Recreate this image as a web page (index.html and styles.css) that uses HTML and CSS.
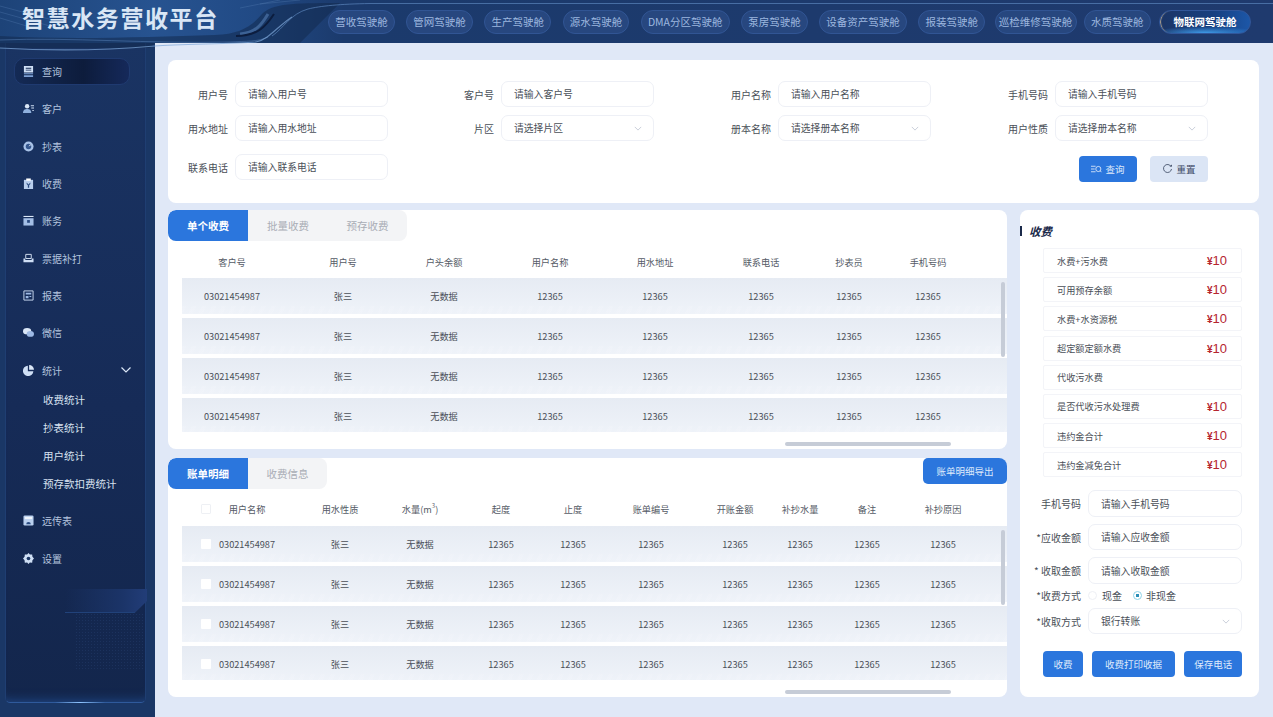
FILE: index.html
```html
<!DOCTYPE html>
<html lang="zh-CN">
  <head>
    <meta charset="UTF-8" />
    <meta name="viewport" content="width=device-width, initial-scale=1.0" />
    <title>智慧水务营收平台</title>
    <link rel="stylesheet" href="styles.css">
  </head>
  <body>
    <svg class="head-deco" width="1273" height="56" viewBox="0 0 1273 56" fill="none">
      <path d="M0 36C70 40 150 37 215 35C240 34 252 26 262 14C272 4 290 3 340 3L300 43H155L150 48H0Z" fill="#13294f" opacity=".55"/>
      <path d="M240 34C256 33 262 24 268 14" stroke="#5f8cc4" stroke-width="3" opacity=".5"/>
      <path d="M236 36C258 36 266 26 274 14" stroke="#0c1d3e" stroke-width="2"/>
      <path d="M272 36C284 28 290 14 308 9C320 6 340 4 370 3.500H1273" stroke="#5f8ac2" opacity=".65"/>
      <path d="M0 40C70 37 150 44 230 42C246 41 258 42 268 37" stroke="#5f8ac2" opacity=".45"/>
      <path d="M0 48C50 51 110 50 155 46C180 44 230 44 256 42C268 40 278 26 292 17" stroke="#7ea6d8" stroke-width="1.2" opacity=".7"/>
      <path d="M0 6L60 22M0 12L50 26M0 18L40 30M260 4L300 0M240 8L280 0" stroke="#5c86ba" opacity=".3"/>
    </svg>

    <header class="topbar">
      <h1 class="logo">智慧水务营收平台</h1>
      <nav class="top-nav">
        <a class="pill">营收驾驶舱</a>
        <a class="pill">管网驾驶舱</a>
        <a class="pill">生产驾驶舱</a>
        <a class="pill">源水驾驶舱</a>
        <a class="pill">DMA分区驾驶舱</a>
        <a class="pill">泵房驾驶舱</a>
        <a class="pill">设备资产驾驶舱</a>
        <a class="pill">报装驾驶舱</a>
        <a class="pill pill-inspect">巡检维修驾驶舱</a>
        <a class="pill pill-water">水质驾驶舱</a>
        <a class="pill active">物联网驾驶舱</a>
      </nav>
    </header>

    <div class="layout">
      <aside class="sidebar">
        <div class="side-frame"></div>
        <div class="side-band"></div>
        <div class="side-dots"></div>
        <ul class="menu">
          <li class="menu-item active">
            <svg class="icon" viewBox="0 0 12 12"><path d="M1 0H11V7H1ZM3 2V3H9V2ZM3 4V5H9V4Z" fill-rule="evenodd" fill="#cfdff5"/><path d="M1 8H11V9H1ZM1 10H11V12H1Z" fill="#7fa2d6"/></svg>
            查询
          </li>
          <li class="menu-item">
            <svg class="icon" viewBox="0 0 12 12"><circle cx="4.5" cy="3.5" r="2.4" fill="#dbe7f7"/><path d="M0 11C0 7.500 2 6.500 4.500 6.500S9 7.500 9 11Z" fill="#8fb0dd"/><path d="M8.500 2.500H12V3.500H8.500ZM9 5H12V6H9ZM10 7.500H12V8.500H10Z" fill="#cfdff5"/></svg>
            客户
          </li>
          <li class="menu-item">
            <svg class="icon" viewBox="0 0 12 12"><circle cx="6" cy="6" r="5.500" fill="#a9c3e8"/><circle cx="6" cy="6" r="3" fill="#35578f"/><path d="M6 6L8 3.500L8.500 4.500Z" fill="#fff"/></svg>
            抄表
          </li>
          <li class="menu-item">
            <svg class="icon" viewBox="0 0 12 12"><path d="M1 2H11V12H1Z" fill="#b9cfee"/><path d="M3.500 0.500H8.500V3H3.500Z" fill="#fff"/><path d="M4 5L6 7L8 5V6.500L6.700 8V10.500H5.300V8L4 6.500Z" fill="#28497f"/></svg>
            收费
          </li>
          <li class="menu-item">
            <svg class="icon" viewBox="0 0 12 12"><path d="M0.500 1H11.500V2.200H0.500Z" fill="#dbe7f7"/><path d="M0.500 3.500H11.500V11.500H0.500Z" fill="#a3bee6"/><path d="M4.500 5.500H7.500V8.500H4.500Z" fill="#28497f"/></svg>
            账务
          </li>
          <li class="menu-item">
            <svg class="icon" viewBox="0 0 12 12"><path d="M3 1.500H9V6H3Z" fill="none" stroke="#dbe7f7"/><path d="M0.500 6H2.500V7.500H9.500V6H11.500V10H0.500Z" fill="#cfdff5"/></svg>
            票据补打
          </li>
          <li class="menu-item">
            <svg class="icon" viewBox="0 0 12 12"><path d="M1 1H11V11H1Z" fill="none" stroke="#cfdff5"/><path d="M3 3H9V5H3ZM3 6.500H6V9H3ZM7 6.500H9V7.500H7Z" fill="#9db9e4"/></svg>
            报表
          </li>
          <li class="menu-item">
            <svg class="icon" viewBox="0 0 12 12"><ellipse cx="4.500" cy="4.500" rx="4.500" ry="3.500" fill="#dbe7f7"/><ellipse cx="8" cy="7.500" rx="4" ry="3.200" fill="#9db9e4"/></svg>
            微信
          </li>
          <li class="menu-item">
            <svg class="icon" viewBox="0 0 12 12"><path d="M5.300 0.700V6.700H11.300A5.700 5.700 0 1 1 5.300 0.700Z" fill="#cfdff5"/><path d="M6.700 0A5.300 5.300 0 0 1 12 5.300H6.700Z" fill="#dbe7f7"/></svg>
            统计
            <svg class="menu-arrow" viewBox="0 0 10 6"><path d="M0.500 0.500L5 5L9.500 0.500" fill="none" stroke="#dbe7f7" stroke-width="1.200"/></svg>
          </li>
          <li>
            <ul class="sub-menu">
              <li>收费统计</li>
              <li>抄表统计</li>
              <li>用户统计</li>
              <li>预存款扣费统计</li>
            </ul>
          </li>
          <li class="menu-item">
            <svg class="icon" viewBox="0 0 12 12"><rect x="0.500" y="0.500" width="11" height="11" rx="1.500" fill="#b9cfee"/><path d="M2 2H10V4.500H2Z" fill="#eef4fc"/><path d="M3.500 10A2.500 2.500 0 0 1 8.500 10Z" fill="#28497f"/></svg>
            远传表
          </li>
          <li class="menu-item menu-item-last">
            <svg class="icon" viewBox="0 0 12 12"><path d="M6 0L7.500 1.700L10 1.500L10.300 4L12 6L10.300 8L10 10.500L7.500 10.300L6 12L4.500 10.300L2 10.500L1.700 8L0 6L1.700 4L2 1.500L4.500 1.700Z" fill="#cfdff5"/><circle cx="6" cy="6" r="2" fill="#1a3563"/></svg>
            设置
          </li>
        </ul>
      </aside>

      <main class="main">
        <section class="card search-card">
          <label class="field"><span>用户号</span><input placeholder="请输入用户号"></label>
          <label class="field"><span>客户号</span><input placeholder="请输入客户号"></label>
          <label class="field"><span>用户名称</span><input placeholder="请输入用户名称"></label>
          <label class="field"><span>手机号码</span><input placeholder="请输入手机号码"></label>

          <label class="field"><span>用水地址</span><input placeholder="请输入用水地址"></label>
          <div class="field"><span>片区</span><div class="select">请选择片区<svg class="chevron" viewBox="0 0 10 6"><path d="M1 1L5 5L9 1"/></svg></div></div>
          <div class="field"><span>册本名称</span><div class="select">请选择册本名称<svg class="chevron" viewBox="0 0 10 6"><path d="M1 1L5 5L9 1"/></svg></div></div>
          <div class="field"><span>用户性质</span><div class="select">请选择册本名称<svg class="chevron" viewBox="0 0 10 6"><path d="M1 1L5 5L9 1"/></svg></div></div>

          <label class="field field-third"><span>联系电话</span><input placeholder="请输入联系电话"></label>
          <div class="search-actions">
            <button class="btn btn-search">
              <svg class="btn-icon" viewBox="0 0 12 10"><path d="M0 2H5M0 5H4M0 8H5" stroke="#fff" fill="none" stroke-width=".8"/><circle cx="8" cy="5" r="2.800" stroke="#fff" fill="none" stroke-width=".8"/><path d="M10 7L11.500 8.500" stroke="#fff" stroke-width=".8"/></svg>
              查询
            </button>
            <button class="btn btn-reset">
              <svg class="btn-icon" viewBox="0 0 10 10"><path d="M8.500 2.500A4 4 0 1 0 9 5" stroke="#33415c" fill="none" stroke-width=".8"/><path d="M7 2.600H9.400V0.400" fill="#33415c"/></svg>
              重置
            </button>
          </div>
        </section>

        <div class="content">
          <div class="left-col">
            <section class="card table-card">
              <div class="tabs">
                <span class="tab active">单个收费</span>
                <span class="tab">批量收费</span>
                <span class="tab tab-last">预存收费</span>
              </div>
              <div class="row-grid cols-charge table-head">
                <span>客户号</span><span>用户号</span><span>户头余额</span><span>用户名称</span><span>用水地址</span><span>联系电话</span><span>抄表员</span><span>手机号码</span>
              </div>
              <div class="table-body">
                <div class="row-grid cols-charge table-row"><span>03021454987</span><span>张三</span><span>无数据</span><span>12365</span><span>12365</span><span>12365</span><span>12365</span><span>12365</span></div>
                <div class="row-grid cols-charge table-row"><span>03021454987</span><span>张三</span><span>无数据</span><span>12365</span><span>12365</span><span>12365</span><span>12365</span><span>12365</span></div>
                <div class="row-grid cols-charge table-row"><span>03021454987</span><span>张三</span><span>无数据</span><span>12365</span><span>12365</span><span>12365</span><span>12365</span><span>12365</span></div>
                <div class="row-grid cols-charge table-row"><span>03021454987</span><span>张三</span><span>无数据</span><span>12365</span><span>12365</span><span>12365</span><span>12365</span><span>12365</span></div>
              </div>
              <div class="scroll-v"></div>
              <div class="scroll-h"></div>
            </section>

            <section class="card table-card">
              <div class="tabs">
                <span class="tab active">账单明细</span>
                <span class="tab tab-last">收费信息</span>
                <button class="btn btn-export">账单明细导出</button>
              </div>
              <div class="row-grid cols-bill table-head table-head-bill">
                <span><i class="check check-head"></i></span><span>用户名称</span><span>用水性质</span><span>水量(m<sup>3</sup>)</span><span>起度</span><span>止度</span><span>账单编号</span><span>开账金额</span><span>补抄水量</span><span>备注</span><span>补抄原因</span>
              </div>
              <div class="table-body">
                <div class="row-grid cols-bill table-row"><span><i class="check"></i></span><span>03021454987</span><span>张三</span><span>无数据</span><span>12365</span><span>12365</span><span>12365</span><span>12365</span><span>12365</span><span>12365</span><span>12365</span></div>
                <div class="row-grid cols-bill table-row"><span><i class="check"></i></span><span>03021454987</span><span>张三</span><span>无数据</span><span>12365</span><span>12365</span><span>12365</span><span>12365</span><span>12365</span><span>12365</span><span>12365</span></div>
                <div class="row-grid cols-bill table-row"><span><i class="check"></i></span><span>03021454987</span><span>张三</span><span>无数据</span><span>12365</span><span>12365</span><span>12365</span><span>12365</span><span>12365</span><span>12365</span><span>12365</span></div>
                <div class="row-grid cols-bill table-row"><span><i class="check"></i></span><span>03021454987</span><span>张三</span><span>无数据</span><span>12365</span><span>12365</span><span>12365</span><span>12365</span><span>12365</span><span>12365</span><span>12365</span></div>
              </div>
              <div class="scroll-v"></div>
              <div class="scroll-h"></div>
            </section>
          </div>

          <section class="card pay-card">
            <h2 class="pay-title">收费</h2>
            <ul class="fee-list">
              <li><span>水费+污水费</span><b><small>¥</small>10</b></li>
              <li><span>可用预存余额</span><b><small>¥</small>10</b></li>
              <li><span>水费+水资源税</span><b><small>¥</small>10</b></li>
              <li><span>超定额定额水费</span><b><small>¥</small>10</b></li>
              <li><span>代收污水费</span></li>
              <li><span>是否代收污水处理费</span><b><small>¥</small>10</b></li>
              <li><span>违约金合计</span><b><small>¥</small>10</b></li>
              <li><span>违约金减免合计</span><b><small>¥</small>10</b></li>
            </ul>
            <div class="pay-form">
              <label class="field"><span>手机号码</span><input placeholder="请输入手机号码"></label>
              <label class="field"><span>*应收金额</span><input placeholder="请输入应收金额"></label>
              <label class="field"><span>* 收取金额</span><input placeholder="请输入收取金额"></label>
              <div class="field field-radio">
                <span>*收费方式</span>
                <div class="radios">
                  <i class="radio"></i>现金
                  <i class="radio radio-on"></i>非现金
                </div>
              </div>
              <div class="field"><span>*收取方式</span><div class="select">银行转账<svg class="chevron" viewBox="0 0 10 6"><path d="M1 1L5 5L9 1"/></svg></div></div>
            </div>
            <div class="pay-actions">
              <button class="btn btn-pay">收费</button>
              <button class="btn btn-print">收费打印收据</button>
              <button class="btn btn-save">保存电话</button>
            </div>
          </section>
        </div>
      </main>
    </div>
  </body>
</html>
```

FILE: styles.css
```css
* {
  margin: 0;
  padding: 0;
  box-sizing: border-box;
}

html,
body {
  height: 100%;
  overflow: hidden;
}

body {
  position: relative;
  display: flex;
  flex-direction: column;
  font-family: "Noto Sans CJK SC", "Noto Sans", sans-serif;
  font-size: 10px;
  color: #4a4f58;
  background-color: #e0e8f7;
}

ul {
  list-style: none;
}

/* header */
.head-deco {
  position: absolute;
  top: 0;
  left: 0;
  z-index: 2;
  pointer-events: none;
}

.topbar {
  position: relative;
  z-index: 3;
  display: flex;
  align-items: flex-start;
  flex: 0 0 43px;
  padding: 10px 0 0 328px;
}

body::before {
  content: "";
  position: absolute;
  top: 0;
  left: 0;
  width: 100%;
  height: 43px;
  background: linear-gradient(90deg, #1d4378 0%, #275390 12%, #214a85 20%, #1b3a6c 27%, #1f3a6e 100%);
}

.logo {
  position: absolute;
  top: 2px;
  left: 22px;
  font-size: 23px;
  line-height: 30px;
  font-weight: 700;
  letter-spacing: 1.6px;
  white-space: nowrap;
  color: #d9e6f5;
}

.top-nav {
  display: flex;
  gap: 11.300px;
}

.pill {
  height: 24px;
  padding: 0 6.200px;
  line-height: 22px;
  font-size: 10.5px;
  white-space: nowrap;
  color: #9db7df;
  background-color: #27477f;
  border: 1px solid #315594;
  border-radius: 12px;
}

.pill-inspect {
  margin-left: -2px;
  padding: 0 3.300px;
}

.pill-water {
  margin-left: -4px;
}

.pill.active {
  margin-left: -3px;
  padding: 0 13.500px;
  font-weight: 700;
  color: #fff;
  border-color: #31569a;
  background: radial-gradient(ellipse 60% 30% at 50% 100%, #3f9be8 0%, rgba(63, 155, 232, 0) 100%), linear-gradient(90deg, #1b3566, #173f80 60%, #1c57a8);
  box-shadow: inset 2px 0 1px -1px #b9a98f;
}

/* sidebar */
.layout {
  display: flex;
  flex: 1;
  min-height: 0;
}

.sidebar {
  position: relative;
  flex: 0 0 155px;
  padding-top: 10px;
  background-color: #1a3766;
}

.side-frame {
  position: absolute;
  top: 0;
  bottom: 14px;
  left: 5px;
  width: 141px;
  background: linear-gradient(180deg, #1a3463 0%, #162b57 55%, #13264c 100%);
  border: 1px solid #1f3e72;
  border-top: none;
  border-bottom: 1px solid #2f5a9c;
  border-radius: 0 0 5px 5px;
  box-shadow: inset 0 -12px 12px -12px #234f92;
}

.side-frame::after {
  content: "";
  position: absolute;
  bottom: -1px;
  left: 50%;
  width: 50px;
  height: 1px;
  margin-left: -21px;
  background: linear-gradient(90deg, transparent, #8fc4ff, transparent);
}

.side-band {
  position: absolute;
  top: 546px;
  left: 65px;
  width: 82px;
  height: 24px;
  background: linear-gradient(90deg, rgba(31, 58, 112, 0), #1b3468 70%, #223d78);
  border-bottom: 1px solid #21427a;
  clip-path: polygon(0 0, 100% 0, 100% 50%, 85% 100%, 0 100%);
}

.side-dots {
  position: absolute;
  top: 570px;
  left: 75px;
  width: 70px;
  height: 58px;
  opacity: 0.22;
  background-image: radial-gradient(#3a5a92 0.6px, transparent 0.8px);
  background-size: 3px 3px;
}

.menu {
  position: relative;
}

.menu-item {
  position: relative;
  isolation: isolate;
  display: flex;
  align-items: center;
  height: 37.3px;
  padding-left: 23px;
  font-size: 10px;
  color: #b4c5df;
}

.menu-item.active::before {
  content: "";
  position: absolute;
  z-index: -1;
  top: 5px;
  bottom: 5px;
  left: 14px;
  right: 25px;
  background: linear-gradient(90deg, #142a55, #0d1c3c 60%, #15295a);
  border: 1px solid #1f3a70;
  border-radius: 10px;
}

.icon {
  flex: 0 0 11px;
  width: 11px;
  height: 11px;
  margin-right: 8px;
}

.menu-arrow {
  position: absolute;
  top: 16px;
  left: 121px;
  width: 10px;
  height: 6px;
}

.sub-menu {
  margin: -2.600px 0 3.400px;
}

.sub-menu li {
  height: 28px;
  padding-left: 43px;
  line-height: 28px;
  font-size: 10.5px;
  color: #d8e2f0;
}

.menu-item-last {
  margin-top: 1.500px;
}

/* main area */
.main {
  position: relative;
  flex: 1;
  min-width: 0;
  padding: 17px 14px 20px 13px;
}

.card {
  position: relative;
  background-color: #fff;
  border-radius: 8px;
}

.search-card {
  display: grid;
  grid-template-columns: 220px 266px 277px 277px;
  grid-template-rows: 26px 26px 31px;
  row-gap: 8px;
  height: 143px;
  padding-top: 21px;
}

.field {
  display: flex;
  align-items: center;
  justify-content: flex-end;
  gap: 7px;
  white-space: nowrap;
  color: #4a4f58;
}

.field-third {
  margin-top: 5px;
  grid-column: 1;
}

.field input,
.select {
  flex: 0 0 153px;
  height: 26px;
  padding-left: 12px;
  font-family: inherit;
  font-size: 9.800px;
  color: #4a4f58;
  background-color: #fff;
  border: 1px solid #eef0f6;
  border-radius: 7px;
  outline: none;
}

.field input::placeholder {
  color: #4a4f58;
  opacity: 1;
}

.select {
  display: flex;
  align-items: center;
  justify-content: space-between;
  padding-right: 11px;
}

.chevron {
  width: 8px;
  height: 5px;
  fill: none;
  stroke: #bcc4d2;
  stroke-width: 1;
}

.search-actions {
  display: flex;
  justify-content: flex-end;
  gap: 13px;
  margin-top: 7px;
  grid-column: 4;
}

.btn {
  display: flex;
  align-items: center;
  justify-content: center;
  height: 26px;
  font-family: inherit;
  font-size: 9.500px;
  color: #dfeafb;
  background-color: #2b76dd;
  border: none;
  border-radius: 4px;
}

.btn-search,
.btn-reset {
  width: 58px;
  gap: 3px;
}

.btn-reset {
  color: #3d4a66;
  background-color: #dbe5f5;
}

.btn-icon {
  width: 11px;
  height: 10px;
}

.content {
  display: flex;
  gap: 13px;
  margin-top: 7px;
}

.left-col {
  display: flex;
  flex-direction: column;
  gap: 9px;
  flex: 0 0 839px;
}

/* tables */
.table-card {
  height: 239px;
  overflow: hidden;
}

.tabs {
  display: flex;
  height: 31px;
}

.tab {
  width: 80px;
  font-size: 10.5px;
  line-height: 31px;
  text-align: center;
  color: #a9adb5;
  background-color: #f3f4f6;
}

.tab.active {
  font-weight: 700;
  color: #fff;
  background-color: #2b76dd;
  border-radius: 8px 0 0 8px;
}

.tab-last {
  width: 79px;
  border-radius: 0 8px 8px 0;
}

.btn-export {
  width: 84px;
  margin-left: auto;
  border-radius: 5px;
}

.row-grid {
  display: grid;
  align-items: center;
  margin-left: 14px;
  font-size: 9.200px;
  white-space: nowrap;
}

/* each cell sits on the centre line of its column */
.row-grid > span {
  display: flex;
  justify-content: center;
  justify-self: start;
  width: 0;
}

.cols-charge {
  grid-template-columns: 111px 101px 106px 105px 106px 88px 79px 1fr;
  padding-left: 50px;
}

.cols-bill {
  grid-template-columns: 41px 93px 80px 81px 72px 78px 84px 65px 67px 76px 1fr;
  padding-left: 24px;
}

.table-head {
  height: 37px;
  padding-top: 5px;
  color: #555b66;
}

.table-head-bill {
  padding-top: 3px;
}

.table-head sup {
  font-size: 6px;
  line-height: 8px;
}

.table-body {
  display: flex;
  flex-direction: column;
  gap: 4px;
  height: 154px;
  overflow: hidden;
}

.table-row {
  flex: 0 0 36px;
  background: repeating-linear-gradient(115deg, rgba(255, 255, 255, 0.1) 0 4px, rgba(255, 255, 255, 0) 4px 9px) 0 100% / 100% 8px no-repeat, linear-gradient(180deg, #e6ebf3, #eff3f9);
}

.check {
  flex: 0 0 10px;
  height: 10px;
  background-color: #fff;
  border-radius: 1px;
}

.check-head {
  border: 1px solid #eef0f4;
}

.scroll-v {
  position: absolute;
  top: 72px;
  right: 2px;
  width: 4px;
  height: 75px;
  background-color: #c6ccd7;
  border-radius: 2px;
}

.scroll-h {
  position: absolute;
  bottom: 3px;
  left: 617px;
  width: 166px;
  height: 4px;
  background-color: #c6ccd7;
  border-radius: 2px;
}

/* right panel */
.pay-card {
  flex: 0 0 239px;
  min-width: 0;
  height: 487px;
  padding: 11px 17px 0 23px;
}

.pay-title {
  position: relative;
  height: 20px;
  margin: 0 0 7px -14px;
  font-size: 11.5px;
  line-height: 20px;
  font-weight: 700;
  font-style: italic;
  color: #1b2a4a;
}

.pay-title::before {
  content: "";
  position: absolute;
  top: 5px;
  left: -9px;
  width: 2px;
  height: 10px;
  background-color: #1b2a4a;
}

.fee-list {
  display: flex;
  flex-direction: column;
  gap: 4.200px;
}

.fee-list li {
  display: flex;
  align-items: center;
  justify-content: space-between;
  height: 25px;
  padding: 0 14px 0 13px;
  font-size: 9.200px;
  border: 1px solid #f3f4f8;
  border-radius: 2px;
}

.fee-list b {
  font-family: "Liberation Sans", sans-serif;
  font-size: 13px;
  font-weight: 400;
  color: #b5252f;
}

.fee-list small {
  font-size: 10px;
  font-weight: 700;
}

.pay-form {
  display: flex;
  flex-direction: column;
  gap: 7px;
  margin: 13px 0 0 -20px;
}

.pay-form input,
.pay-form .select {
  flex-basis: 154px;
  height: 26.500px;
}

.field-radio {
  height: 10px;
}

.radios {
  display: flex;
  align-items: center;
  flex: 0 0 154px;
  font-size: 10px;
}

.radio {
  flex: 0 0 9px;
  height: 9px;
  margin-right: 5px;
  border: 1px solid #eef0f5;
  border-radius: 50%;
}

.radio-on {
  margin: 0 4px 0 11px;
  border-color: #8fd3e8;
  background: radial-gradient(circle, #2b8fb8 0 1.500px, #fff 2px);
}

.pay-actions {
  display: flex;
  justify-content: flex-end;
  gap: 9px;
  margin-top: 17px;
}

.btn-pay {
  width: 40px;
}

.btn-print {
  width: 84px;
}

.btn-save {
  width: 58px;
}
```
